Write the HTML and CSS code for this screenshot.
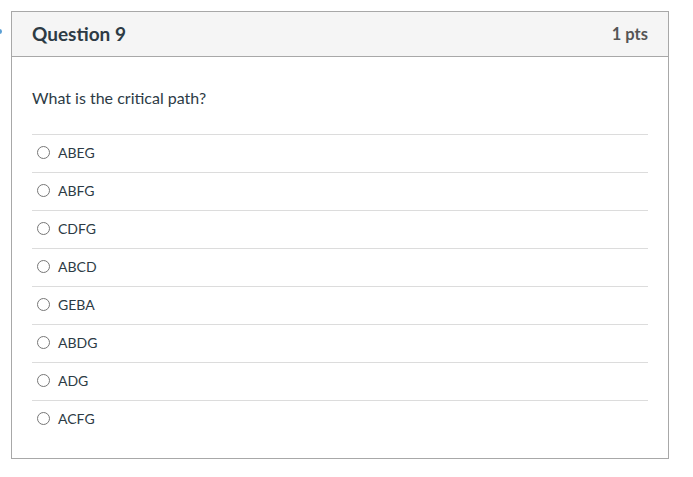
FILE: index.html
```html
<!DOCTYPE html>
<html>
<head>
<meta charset="utf-8">
<link rel="stylesheet" href="styles.css">
</head>
<body>
<div class="marker"></div>
<div class="card">
  <div class="header">
    <span class="title">Question 9</span>
    <span class="pts">1 pts</span>
  </div>
  <div class="body">
    <p class="question">What is the critical path?</p>
    <div class="answers">
      <label class="answer"><span class="radio"></span>ABEG</label>
      <label class="answer"><span class="radio"></span>ABFG</label>
      <label class="answer"><span class="radio"></span>CDFG</label>
      <label class="answer"><span class="radio"></span>ABCD</label>
      <label class="answer"><span class="radio"></span>GEBA</label>
      <label class="answer"><span class="radio"></span>ABDG</label>
      <label class="answer"><span class="radio"></span>ADG</label>
      <label class="answer"><span class="radio"></span>ACFG</label>
    </div>
  </div>
</div>
</body>
</html>
```
FILE: styles.css
```css
html, body {
  margin: 0;
  padding: 0;
  background: #fff;
}
body {
  padding: 11px 0 0 11px;
  font-family: Lato, "Open Sans", sans-serif;
  color: #2d3b45;
  position: relative;
}
.marker {
  position: absolute;
  left: -3px;
  top: 29px;
  width: 5px;
  height: 5px;
  border-radius: 50%;
  background: #5a9fd4;
}
.card {
  width: 656px;
  height: 446px;
  border: 1px solid #a8a8a8;
  box-sizing: content-box;
}
.header {
  box-sizing: border-box;
  height: 45px;
  background: #f5f5f5;
  border-bottom: 1px solid #a8a8a8;
  display: flex;
  align-items: center;
  justify-content: space-between;
  padding: 0 20px 2px;
}
.title {
  font-size: 19px;
  font-weight: 700;
  color: #2d3b45;
}
.pts {
  font-size: 16.5px;
  font-weight: 700;
  color: #555;
  position: relative;
  top: 1px;
}
.body {
  padding: 29px 20px 20px;
}
.question {
  margin: 0 0 24px;
  font-size: 16px;
  line-height: 24px;
}
.answer {
  box-sizing: border-box;
  display: flex;
  align-items: center;
  height: 38px;
  border-top: 1px solid #dcdcdc;
  font-size: 14px;
  padding: 0 0 3px 5px;
}
.radio {
  width: 11px;
  height: 11px;
  border: 1px solid #777;
  border-radius: 50%;
  margin-right: 8px;
  background: #fff;
}
```
